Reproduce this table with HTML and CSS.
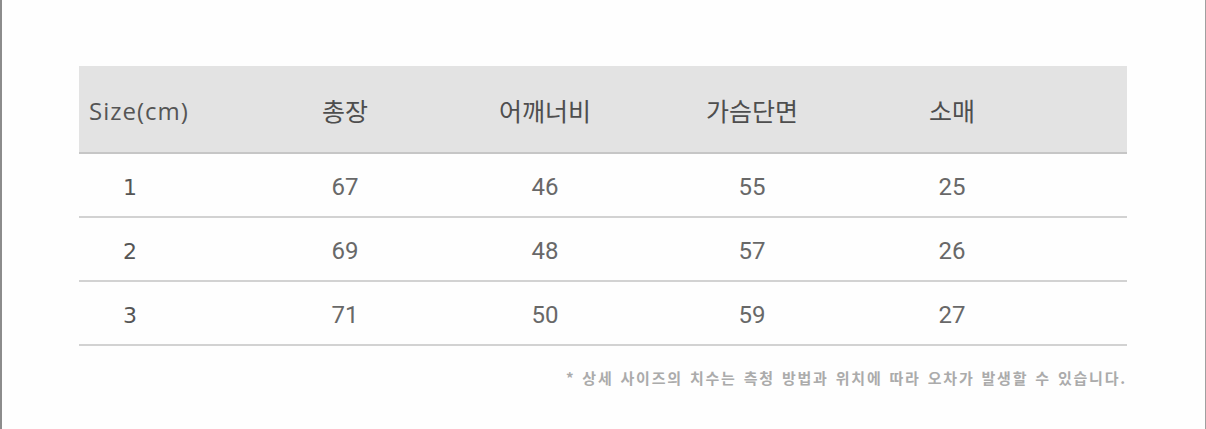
FILE: index.html
```html
<!DOCTYPE html>
<html lang="ko">
<head>
<meta charset="utf-8">
<link rel="stylesheet" href="styles.css">
</head>
<body>
<div class="frame">
  <div class="sheet">
    <div class="table">
      <div class="row head">
        <div class="cell first">Size(cm)</div>
        <div class="cell">총장</div>
        <div class="cell">어깨너비</div>
        <div class="cell">가슴단면</div>
        <div class="cell">소매</div>
        <div class="cell"></div>
      </div>
      <div class="row body">
        <div class="cell first">1</div>
        <div class="cell">67</div>
        <div class="cell">46</div>
        <div class="cell">55</div>
        <div class="cell">25</div>
        <div class="cell"></div>
      </div>
      <div class="row body">
        <div class="cell first">2</div>
        <div class="cell">69</div>
        <div class="cell">48</div>
        <div class="cell">57</div>
        <div class="cell">26</div>
        <div class="cell"></div>
      </div>
      <div class="row body">
        <div class="cell first">3</div>
        <div class="cell">71</div>
        <div class="cell">50</div>
        <div class="cell">59</div>
        <div class="cell">27</div>
        <div class="cell"></div>
      </div>
    </div>
    <p class="note">* 상세 사이즈의 치수는 측청 방법과 위치에 따라 오차가 발생할 수 있습니다.</p>
  </div>
</div>
</body>
</html>
```

FILE: styles.css
```css
html, body {
  margin: 0;
  padding: 0;
  background: #ffffff;
}

.frame {
  box-sizing: border-box;
  width: 1206px;
  height: 429px;
  border-left: 2px solid #8c8c8c;
  border-right: 1px solid #a0a0a0;
  background: #fefefe;
  overflow: hidden;
}

.sheet {
  width: 1048px;
  margin-left: 77px;
  padding-top: 66px;
}

.row {
  display: grid;
  grid-template-columns: 166px 200px 200px 214px 186px 1fr;
  align-items: center;
}

.cell {
  text-align: center;
}

.head {
  box-sizing: content-box;
  height: 84px;
  padding-top: 2px;
  background: #e3e3e3;
  border-bottom: 2px solid #c6c6c6;
  font-family: "Noto Sans CJK KR", "Noto Sans", sans-serif;
  font-size: 25px;
  color: #4e4e4e;
}

.head .first {
  text-align: left;
  padding-left: 10px;
  font-family: "Open Sans", "Noto Sans", sans-serif;
  font-size: 24px;
  letter-spacing: 1px;
  color: #555555;
}

.body {
  height: 58px;
  padding-top: 4px;
  border-bottom: 2px solid #d2d2d2;
  font-family: Roboto, "Liberation Sans", sans-serif;
  font-size: 24px;
  color: #686868;
}

.body .first {
  text-align: left;
  padding-left: 44px;
  font-family: "DejaVu Sans", sans-serif;
  font-size: 22px;
  color: #555555;
}

.note {
  margin: 22px 0 0;
  text-align: right;
  font-family: "Noto Sans CJK KR", sans-serif;
  font-weight: 700;
  font-size: 15px;
  line-height: 20px;
  letter-spacing: 1.8px;
  word-spacing: 1px;
  color: #ababab;
}
```
